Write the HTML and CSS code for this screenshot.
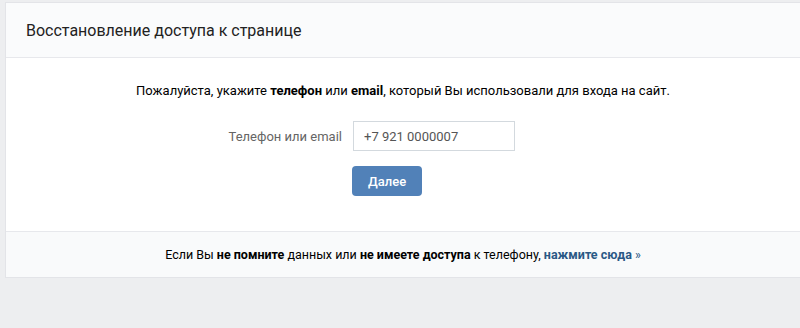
FILE: index.html
```html
<!DOCTYPE html>
<html lang="ru">
<head>
<meta charset="utf-8">
<title>Восстановление доступа к странице</title>
<link rel="stylesheet" href="styles.css">
</head>
<body>
<div class="page">
  <div class="card">
    <div class="card-header">Восстановление доступа к странице</div>
    <div class="card-body">
      <p class="intro">Пожалуйста, укажите <b>телефон</b> или <b>email</b>, который Вы использовали для входа на сайт.</p>
      <div class="form">
        <label class="label" for="login">Телефон или email</label>
        <input class="input" id="login" type="text" value="+7 921 0000007">
        <button class="button" type="button">Далее</button>
      </div>
    </div>
    <div class="card-footer"><span>Если Вы <b>не помните</b> данных или <b>не имеете доступа</b> к телефону, <a class="link" href="#"><b>нажмите сюда</b> »</a></span></div>
  </div>
</div>
</body>
</html>
```
FILE: styles.css
```css
html, body {
  margin: 0;
  padding: 0;
}
body {
  background: #edeef0;
  font-family: Roboto, "Open Sans", "Liberation Sans", sans-serif;
  font-size: 13px;
  color: #000;
  height: 328px;
  overflow: hidden;
}
.page {
  padding: 2px 0 0 5px;
}
.card {
  background: #fff;
  border: 1px solid #e3e4e8;
  border-right: none;
}
.card-header {
  height: 54px;
  display: flex;
  align-items: center;
  padding: 0 20px;
  background: #fafbfc;
  border-bottom: 1px solid #e7e8ec;
  font-size: 16px;
  color: #222;
}
.card-body {
  padding: 24px 0 35px;
}
.intro {
  margin: 0;
  line-height: 18px;
  text-align: center;
  color: #000;
}
.intro b {
  font-weight: 700;
}
.form {
  display: grid;
  grid-template-columns: 336px 162px;
  column-gap: 11px;
  row-gap: 15px;
  margin-top: 21px;
  align-items: center;
}
.label {
  text-align: right;
  color: #656565;
}
.input {
  box-sizing: border-box;
  width: 162px;
  height: 30px;
  margin: 0;
  padding: 0 10px;
  border: 1px solid #d3d9de;
  border-radius: 0;
  font-family: inherit;
  font-size: 13px;
  color: #555;
  outline: none;
}
.button {
  grid-column: 2;
  justify-self: start;
  margin-left: -1px;
  height: 30px;
  padding: 0 16px;
  border: none;
  border-radius: 4px;
  background: #5181b8;
  color: #fff;
  font-family: inherit;
  font-size: 13px;
  font-weight: 500;
}
.card-footer {
  height: 45px;
  display: flex;
  align-items: center;
  justify-content: center;
  background: #f9fafb;
  border-top: 1px solid #e7e8ec;
  font-size: 12.5px;
}
.card-footer b {
  font-weight: 700;
}
.link {
  color: #2a5885;
  text-decoration: none;
}
.link b {
  font-weight: 700;
}
```
